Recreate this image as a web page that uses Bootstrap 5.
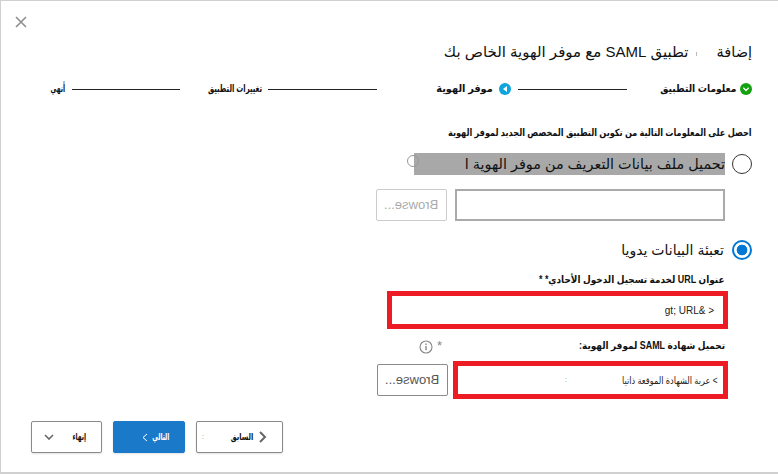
<!DOCTYPE html>
<html lang="ar" dir="rtl">
<head>
<meta charset="utf-8">
<title>SAML</title>
<link rel="stylesheet" href="https://cdn.jsdelivr.net/npm/bootstrap@5.3.0/dist/css/bootstrap.min.css">
<style>
html,body{margin:0;height:474px;overflow:hidden;background:#fff}
body{font-family:"Liberation Sans","DejaVu Sans",sans-serif;color:#111}
.shell{width:778px;height:474px;border-top:1px solid #d0d0d0;border-left:1px solid #d0d0d0;border-bottom:2px solid #d0d0d0;padding:0 26px 0 30px}
.close-row{height:31px;padding-top:15px;justify-content:flex-end;margin-left:-16px}
.x-ico{display:block;width:12px;height:12px}
.ttl{font-size:15px;line-height:20px;margin:10px 0 0;font-weight:400;white-space:nowrap;display:flex;align-items:center}
.ttl-a{font-size:14.5px}
.ttl-tick{width:1px;height:4px;background:#bbb;margin:3px 20px 0 7px}
.sq{display:inline-block;white-space:nowrap;transform-origin:100% 50%}
.k87{transform:scaleX(.87)}.k93{transform:scaleX(.93)}.k66{transform:scaleX(.66)}.k58{transform:scaleX(.58)}
.k81{transform:scaleX(.815)}.k88{transform:scaleX(.89)}.k82{transform:scaleX(.82)}.k68{transform:scaleX(.68)}.k57{transform:scaleX(.6)}.k45{transform:scaleX(.62)}
.steps{height:20px;margin-top:17px;font-size:10.5px;font-weight:700;align-items:center;white-space:nowrap}
.st-dot{width:12px;height:12px;border-radius:50%;flex:none}
.dot-g{background:#13a10e}.dot-b{background:#0ea5dc}
.st-line{height:1px;background:#222;flex:none;width:109px}
.w75{width:75px;margin-right:4px}.w56{width:56px;margin-right:6px}.w54{width:54px;margin-right:6px}.w15{width:15px;margin-right:7px}
.l1{margin-right:34px}.d2{margin-right:7px}.l2{margin-right:60px}.l3{margin-right:28px;width:108px}
.intro{font-size:10px;font-weight:700;line-height:14px;margin-top:27px;white-space:nowrap}
.mt-rad1{margin-top:13px}.mt-rad2{margin-top:18px}
.rad{width:20px;height:20px;margin:0;flex:none;border:1.5px solid #333;float:none!important}
.form-check-input.rad:checked{background:radial-gradient(circle,#0078d4 0 5px,#fff 5.7px);border:2px solid #0078d4}
.rad-txt{font-size:14px;line-height:22px;white-space:nowrap}
.rad-row{gap:8px}
.hl{background:#a8a8a8;width:311px;height:22px;overflow:hidden;position:relative;font-size:14.4px;margin-right:-1px;margin-left:0}
.ghost{position:absolute;left:406px;top:154px;width:12px;height:12px;border:1px solid #999;border-radius:50%}
.row-a{margin-top:14px;padding-right:1px}
.field-a{width:270px;height:32px;border:2px solid #aaa;background:#fff;border-radius:0;margin-right:26px}
.brow{width:71px;height:32px;border:1px solid #8a8a8a;border-radius:2px;background:#fff;color:#555;font-size:13px;padding:0;box-shadow:none}
.brow span{display:inline-block;transform:scaleX(-1)}
.brow.off{border-color:#ccc;color:#aaa;opacity:1}
.lbl{font-size:10px;font-weight:700;line-height:14px;white-space:nowrap;padding-right:1px}
.lbl-a{margin-top:12px;margin-right:26px}
.redbox{border:5px solid #ed1c24;height:38px;font-size:10px;display:flex;align-items:center;background:#fff;white-space:nowrap;color:#222}
.red-a{width:341px;padding-right:9px;margin-top:4px;margin-right:24px}
.red-b{width:275px;padding-right:6px}
.rb-txt{width:90px;flex:none}
.speck{color:#999;font-size:8px;margin-right:60px}
.inf{width:14px;height:14px;display:block;margin-top:2px}
.star{color:#888;font-size:13px;line-height:14px}
.lbl-b-row{margin-top:10px;margin-right:26px;height:14px}
.lbl-b{width:284px}
.rb-row{margin-top:8px;margin-right:24px;gap:5px}
.foot{margin-top:22px;gap:11px;justify-content:flex-end}
.fbtn{height:32px;border:1px solid #8a8a8a;border-radius:2px;background:#fff;font-size:9.8px;font-weight:700;color:#111;padding:0;box-shadow:0 1px 2px rgba(0,0,0,.12);display:flex;align-items:center;white-space:nowrap}
.fbtn.pri{background:#1b79c9;border-color:#1b79c9;color:#fff;width:72px;padding-right:15px;gap:5px}
.fbtn.bk{width:87px;padding-right:15px;gap:5px}
.fbtn.en{width:71px;padding-right:15px;padding-left:12px;justify-content:space-between}
.w21{width:21px}.w16{width:16px}.w14{width:14px}
.speck2{color:#999;font-size:8px;font-weight:400;margin-right:23px}
</style>
</head>
<body>
<div class="shell d-flex flex-column position-relative">
  <div class="close-row d-flex">
    <svg class="x-ico" viewBox="0 0 12 12" aria-label="إغلاق"><path d="M1 1 11 11M11 1 1 11" stroke="#8f8f8f" stroke-width="1.6" fill="none"/></svg>
  </div>
  <h1 class="ttl"><span class="ttl-a">إضافة</span><span class="ttl-tick"></span><span>تطبيق SAML مع موفر الهوية الخاص بك</span></h1>
  <div class="steps d-flex">
    <span class="st-dot dot-g d-flex align-items-center justify-content-center"><svg width="8" height="8" viewBox="0 0 8 8"><path d="M1.3 2.8 4 5.5 6.7 2.8" stroke="#fff" stroke-width="1.3" fill="none"/></svg></span>
    <span class="w75"><span class="sq k87">معلومات التطبيق</span></span>
    <span class="st-line l1"></span>
    <span class="st-dot dot-b d-flex align-items-center justify-content-center d2"><svg width="8" height="8" viewBox="0 0 8 8"><path d="M6 1 2 4 6 7Z" fill="#fff"/></svg></span>
    <span class="w56"><span class="sq k93">موفر الهوية</span></span>
    <span class="st-line l2"></span>
    <span class="w54"><span class="sq k66">تغييرات التطبيق</span></span>
    <span class="st-line l3"></span>
    <span class="w15"><span class="sq k58">أنهي</span></span>
  </div>
  <div class="intro"><span class="sq k81">احصل على المعلومات التالية من تكوين التطبيق المخصص الجديد لموفر الهوية</span></div>
  <div class="d-flex align-items-center rad-row mt-rad1">
    <input class="form-check-input rad" type="radio" name="src" aria-label="ملف">
    <div class="hl rad-txt">تحميل ملف بيانات التعريف من موفر الهوية ا</div>
  </div>
  <div class="d-flex row-a gap-2">
    <input class="field-a" type="text" aria-label="ملف" disabled>
    <button class="btn brow off" disabled><span dir="ltr">Browse...</span></button>
  </div>
  <div class="d-flex align-items-center rad-row mt-rad2">
    <input class="form-check-input rad" type="radio" name="src" checked aria-label="يدويا">
    <div class="rad-txt">تعبئة البيانات يدويا</div>
  </div>
  <div class="lbl lbl-a"><span class="sq k88">عنوان URL لخدمة تسجيل الدخول الأحادي* *</span></div>
  <div class="redbox red-a"><span dir="ltr">gt; URL&amp; &gt;</span></div>
  <div class="d-flex align-items-center lbl-b-row">
    <div class="lbl lbl-b"><span class="sq k88">تحميل شهادة SAML لموفر الهوية:</span></div>
    <span class="star">*</span>
    <svg class="inf me-1" viewBox="0 0 14 14" aria-label="معلومات"><circle cx="7" cy="7" r="6" fill="none" stroke="#888" stroke-width="1.1"/><path d="M7 6v4.2M7 3.6v1.3" stroke="#777" stroke-width="1.2"/></svg>
  </div>
  <div class="d-flex align-items-center rb-row">
    <div class="redbox red-b"><span class="rb-txt"><span class="sq k82">&gt; عربة الشهادة الموقعة ذاتيا</span></span><span class="speck">:</span></div>
    <button class="btn brow"><span dir="ltr">Browse...</span></button>
  </div>
  <div class="d-flex foot">
    <button class="fbtn bk"><svg width="9" height="12" viewBox="0 0 9 12"><path d="M2 1 7 6 2 11" stroke="#666" stroke-width="2" fill="none"/></svg><span class="w21"><span class="sq k68">السابق</span></span><span class="speck2">:</span></button>
    <button class="fbtn pri"><span class="w16"><span class="sq k57">التالي</span></span><svg width="6" height="9" viewBox="0 0 6 9"><path d="M5 1 1 4.5 5 8" stroke="#fff" stroke-width="1" fill="none"/></svg></button>
    <button class="fbtn en"><span class="w14"><span class="sq k45">إنهاء</span></span><svg width="10" height="6" viewBox="0 0 10 6"><path d="M1 1 5 5 9 1" stroke="#666" stroke-width="1.6" fill="none"/></svg></button>
  </div>
  <span class="ghost"></span>
</div>
<script src="https://cdn.jsdelivr.net/npm/bootstrap@5.3.0/dist/js/bootstrap.bundle.min.js"></script>
</body>
</html>
